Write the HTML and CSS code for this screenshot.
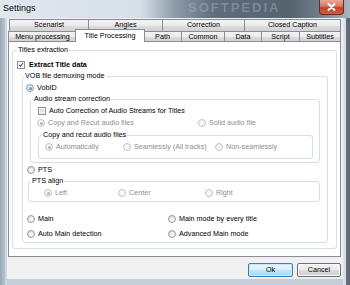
FILE: index.html
```html
<!DOCTYPE html>
<html>
<head>
<meta charset="utf-8">
<title>Settings</title>
<link rel="stylesheet" href="styles.css">
</head>
<body>
<div class="window">
  <div class="titlebar">
    <span class="title">Settings</span>
    <span class="watermark">SOFTPEDIA</span>
    <div class="close">
      <svg width="9" height="8" viewBox="0 0 9 8"><path d="M1.5 1 L7.5 7 M7.5 1 L1.5 7" stroke="#fff" stroke-width="1.8" stroke-linecap="round"/></svg>
    </div>
  </div>
  <div class="client">
    <div class="tabs">
      <div class="tabrow back">
        <div class="tab">Scenarist</div>
        <div class="tab">Angles</div>
        <div class="tab">Correction</div>
        <div class="tab">Closed Caption</div>
      </div>
      <div class="tabrow front">
        <div class="tab">Menu processing</div>
        <div class="tab selected">Title Processing</div>
        <div class="tab">Path</div>
        <div class="tab">Common</div>
        <div class="tab">Data</div>
        <div class="tab">Script</div>
        <div class="tab">Subtitles</div>
      </div>
    </div>
    <div class="panel">
      <fieldset class="group g-titles">
        <legend class="lg-titles">Titles extraction</legend>
        <div class="row r-extract">
          <span class="cb">
            <svg width="8" height="8" viewBox="0 0 8 8"><path d="M1.6 3.9 L3.3 5.9 L6.6 1.4" fill="none" stroke="#2d4fa6" stroke-width="1.4"/></svg>
          </span>
          <b class="bold">Extract Title data</b>
        </div>
        <fieldset class="group g-vob">
          <legend class="lg-vob">VOB file demuxing mode</legend>
          <div class="row r-vobid"><span class="rb on"></span><span>VobID</span></div>
          <fieldset class="group g-audio">
            <legend class="lg-audio">Audio stream correction</legend>
            <div class="row r-autocorr"><span class="cb empty"></span><span>Auto Correction of Audio Streams for Titles</span></div>
            <div class="row r-copy">
              <div class="opt w161"><span class="rb dis dot"></span><span class="dtext">Copy and Recut audio files</span></div>
              <div class="opt"><span class="rb dis"></span><span class="dtext">Solid audio file</span></div>
            </div>
            <fieldset class="group g-recut">
              <legend class="lg-recut">Copy and recut audio files</legend>
              <div class="row r-recut">
                <div class="opt w78"><span class="rb dis dot"></span><span class="dtext">Automatically</span></div>
                <div class="opt w92"><span class="rb dis"></span><span class="dtext">Seamlessly (All tracks)</span></div>
                <div class="opt"><span class="rb dis"></span><span class="dtext">Non-seamlessly</span></div>
              </div>
            </fieldset>
          </fieldset>
          <div class="row r-pts"><span class="rb"></span><span>PTS</span></div>
          <fieldset class="group g-align">
            <legend class="lg-align">PTS align</legend>
            <div class="row r-align">
              <div class="opt w74"><span class="rb dis dot"></span><span class="dtext">Left</span></div>
              <div class="opt w87"><span class="rb dis"></span><span class="dtext">Center</span></div>
              <div class="opt"><span class="rb dis"></span><span class="dtext">Right</span></div>
            </div>
          </fieldset>
          <div class="row r-main">
            <div class="opt w141"><span class="rb"></span><span>Main</span></div>
            <div class="opt"><span class="rb"></span><span>Main mode by every title</span></div>
          </div>
          <div class="row r-auto">
            <div class="opt w141"><span class="rb"></span><span>Auto Main detection</span></div>
            <div class="opt"><span class="rb"></span><span>Advanced Main mode</span></div>
          </div>
        </fieldset>
      </fieldset>
    </div>
    <div class="buttons">
      <button class="btn default">Ok</button>
      <button class="btn">Cancel</button>
    </div>
  </div>
</div>
</body>
</html>
```
FILE: styles.css
```css
* { box-sizing: border-box; }
html, body { margin: 0; padding: 0; }
body {
  width: 350px;
  height: 285px;
  overflow: hidden;
  font-family: "Liberation Sans", Arial, sans-serif;
  font-size: 7.2px;
  color: #000;
}
.window {
  width: 350px;
  height: 285px;
  display: flex;
  flex-direction: column;
  background: linear-gradient(to right, #9aa6b1 0px, #b7c3ce 5px, #dfe6ec 6px, #c3ced8 7px, #c3ced8 343px, #dfe5ea 343px, #d4dce3 346px, #66737f 346px, #5b6773 350px);
}
.titlebar {
  position: relative;
  height: 18px;
  display: flex;
  align-items: flex-start;
  background: linear-gradient(to right, #dfe7ef 0px, #d6e0e9 140px, #8e9aa6 175px, #5f6d7b 215px, #56636f 290px, #6f7c89 318px, #a9b6c2 350px);
}
.title {
  padding: 3px 0 0 3px;
  font-size: 9px;
  line-height: 10px;
  color: #000;
  text-shadow: 0 0 4px #fff;
}
.watermark {
  position: absolute;
  left: 188px;
  top: 1px;
  font-size: 13px;
  line-height: 14px;
  font-weight: bold;
  letter-spacing: 2px;
  color: rgba(190, 200, 210, 0.35);
}
.close {
  margin-left: auto;
  margin-right: 6px;
  width: 25px;
  height: 15px;
  display: flex;
  align-items: center;
  justify-content: center;
  border: 1px solid #6b2a22;
  border-top: none;
  border-radius: 0 0 4px 4px;
  background: linear-gradient(#e9a899 0%, #d8745f 45%, #c0422c 55%, #d2603f 100%);
}
.client {
  margin: 0 7px;
  height: 261px;
  background: #f0f0f0;
  padding: 1px 1px 0 1px;
  display: flex;
  flex-direction: column;
}
.tabs { display: flex; flex-direction: column; }
.tabrow { display: grid; }
.tabrow.back {
  margin-left: 1px;
  height: 12px;
  grid-template-columns: 80px 74px 82px 96px;
}
.tabrow.front {
  height: 10px;
  grid-template-columns: 69px 67px 38px 43px 37px 38px 41px;
}
.tab {
  border: 1px solid #898c95;
  border-bottom: none;
  background: linear-gradient(#f3f3f3 0%, #ebebeb 50%, #dedede 51%, #d2d2d2 100%);
  text-align: center;
  line-height: 9px;
  white-space: nowrap;
  overflow: hidden;
}
.tab + .tab { border-left: none; }
.back .tab { line-height: 10px; }
.tab.selected {
  position: relative;
  z-index: 1;
  margin: -2px -1px -1px -2px;
  border-left: 1px solid #898c95;
  background: #fff;
  line-height: 12px;
}
.panel {
  width: 333px;
  height: 216px;
  border: 1px solid #898c95;
  background: #fff;
  padding: 4px 3px 0 3px;
}
.group {
  margin: 0;
  min-width: 0;
  border: 1px solid #d5dfe5;
  border-radius: 3px;
}
legend {
  padding: 0 1px;
  line-height: 8px;
  height: 8px;
}
.row {
  display: flex;
  align-items: center;
  height: 8px;
  line-height: 8px;
  white-space: nowrap;
}
.opt { display: flex; align-items: center; gap: 3px; }
.row > .rb + span, .row > .cb + span { margin-left: 3px; }
.w161 { width: 161px; }
.w78 { width: 78px; }
.w92 { width: 92px; }
.w74 { width: 74px; }
.w87 { width: 87px; }
.w141 { width: 141px; }

.g-titles { padding: 0 8px 5px 4px; }
.r-extract { margin-top: 7px; }
.r-extract .bold { margin-left: 4px; font-weight: bold; }

.g-vob { margin: 3px 0 0 5px; padding: 0 7px 4px 3px; }
.lg-vob { margin-left: -2px; }
.r-vobid { margin-top: 4px; }

.g-audio { margin: 3px 0 0 4px; padding: 0 6px 3px 7px; }
.lg-audio { margin-left: -5px; }
.r-autocorr { margin-top: 4px; }
.r-copy { margin-top: 4px; margin-left: -1px; }

.g-recut { margin-top: 4px; padding: 0 0 7px 6px; }
.lg-recut { margin-left: -3px; }
.r-recut { margin-top: 4px; }

.r-pts { margin-top: 3px; margin-left: 1px; }
.g-align { margin: 3px 0 0 2px; padding: 0 0 4px 15px; }
.lg-align { margin-left: -13px; }
.r-align { margin-top: 4px; }

.r-main { margin-top: 13px; margin-left: 1px; }
.r-auto { margin-top: 7px; margin-left: 1px; }

.cb {
  width: 8px;
  height: 8px;
  flex: none;
  border: 1px solid #8e8f8f;
  background: linear-gradient(135deg, #f6f6f6, #ffffff);
  display: flex;
  align-items: center;
  justify-content: center;
}
.cb svg { display: block; }
.cb.empty {
  background: linear-gradient(135deg, #d5d5d5, #f4f4f4);
  box-shadow: inset 0 0 0 1px #f4f4f4;
}
.rb {
  position: relative;
  width: 8px;
  height: 8px;
  flex: none;
  border-radius: 50%;
  border: 1px solid #9a9a9a;
  background: radial-gradient(circle at 60% 65%, #ffffff 0%, #e4e4e4 60%, #cfcfcf 100%);
}
.rb.dis {
  border-color: #c4c4c4;
  background: radial-gradient(circle at 60% 65%, #fcfcfc 0%, #efefef 100%);
}
.rb.on::after, .rb.dot::after {
  content: "";
  position: absolute;
  left: 1.5px;
  top: 1.5px;
  width: 3px;
  height: 3px;
  border-radius: 50%;
}
.rb.on::after { background: radial-gradient(circle at 40% 40%, #6ec0f5, #1c66b8); }
.rb.dot::after { background: #b3b3b3; }
.dtext { color: #8d8d8d; }

.buttons {
  display: flex;
  justify-content: flex-end;
  gap: 4px;
  margin-top: 6px;
  padding-right: 1px;
}
.btn {
  width: 44px;
  height: 14px;
  padding: 0;
  font-family: "Liberation Sans", Arial, sans-serif;
  font-size: 7.2px;
  line-height: 12px;
  color: #000;
  border: 1px solid #707070;
  border-radius: 2px;
  background: linear-gradient(#f2f2f2 0%, #ebebeb 50%, #dddddd 51%, #cfcfcf 100%);
  box-shadow: inset 0 0 0 1px #fbfbfb;
}
.btn.default {
  width: 45px;
  border-color: #3c7fb1;
  background: linear-gradient(#eaf6fd 0%, #d9f0fc 50%, #bee6fd 51%, #a7d9f5 100%);
  box-shadow: inset 0 0 0 1px #c6e8fb;
}
```
